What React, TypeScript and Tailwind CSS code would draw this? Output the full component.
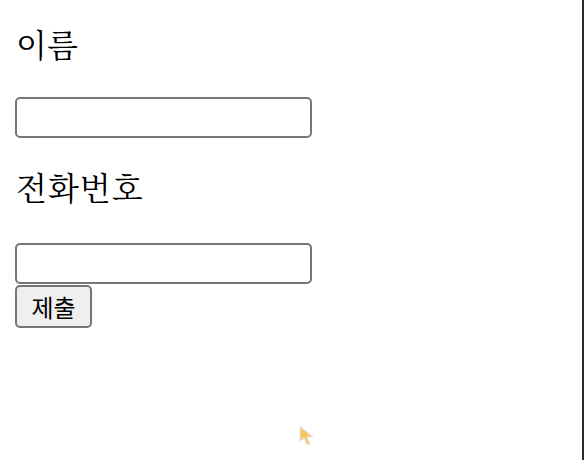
import React from "react";

export default function App() {
  return (
    <div className="relative w-[584px] h-[460px] bg-white border-r-2 border-[#2b2b2b] overflow-hidden">
      <form className="flex flex-col items-start pl-[15px]">
        <label
          className="mt-[23px] ml-[1px] text-[32px] leading-[40px] text-black"
          style={{ fontFamily: '"Noto Serif CJK KR", "Noto Sans CJK KR", serif' }}
        >
          이름
        </label>
        <input
          type="text"
          className="mt-[34px] w-[297px] h-[41px] border-2 border-[#767676] rounded-[5px] bg-white outline-none"
        />
        <label
          className="mt-[28px] ml-[1px] text-[32px] leading-[40px] tracking-[1px] text-black"
          style={{ fontFamily: '"Noto Serif CJK KR", "Noto Sans CJK KR", serif' }}
        >
          전화번호
        </label>
        <input
          type="text"
          className="mt-[37px] w-[297px] h-[41px] border-2 border-[#767676] rounded-[5px] bg-white outline-none"
        />
        <button
          type="button"
          className="mt-[1px] w-[77px] h-[43px] border-2 border-[#767676] rounded-[5px] bg-[#efefef] text-[24px] leading-none text-black font-['Noto_Sans_CJK_KR',sans-serif]"
        >
          제출
        </button>
      </form>
      <svg
        className="absolute left-[298px] top-[424px]"
        width="18"
        height="26"
        viewBox="0 0 18 26"
      >
        <path
          d="M2 2 L2 18 L6 14 L9 21 L12 20 L9 13 L15 13 Z"
          fill="#f7c75a"
          stroke="#e8e8e8"
          strokeWidth="1.2"
          strokeLinejoin="round"
        />
      </svg>
    </div>
  );
}
